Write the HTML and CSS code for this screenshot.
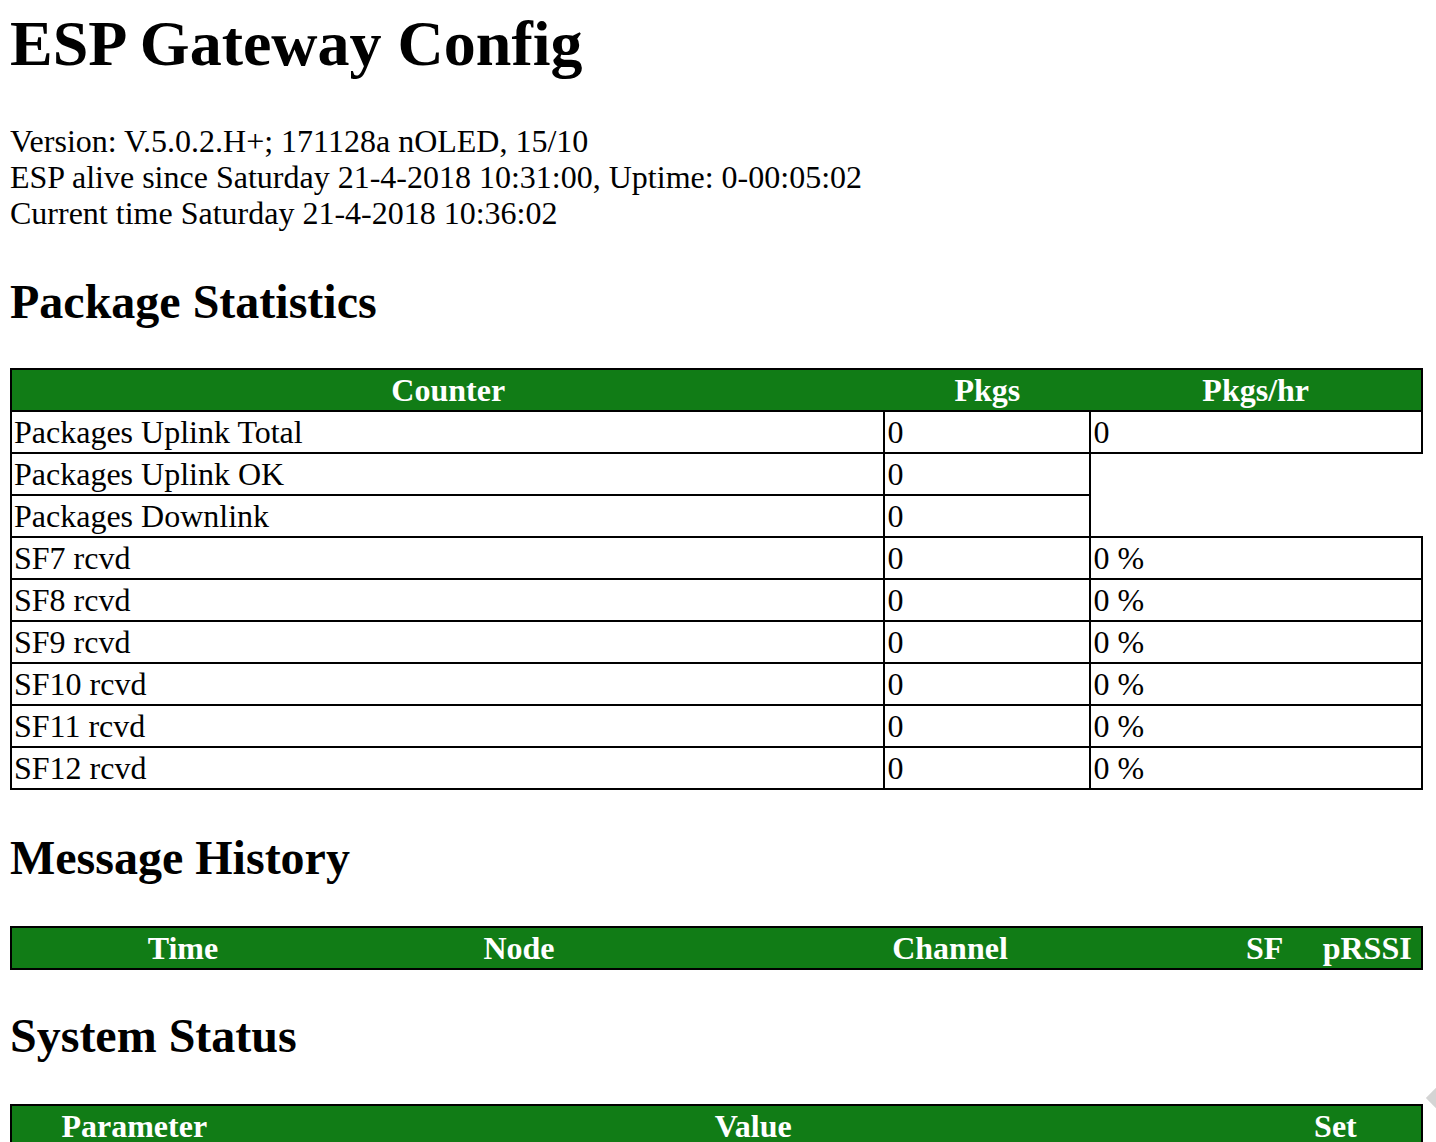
FILE: index.html
```html
<!DOCTYPE html>
<html lang="en">
<head>
  <meta charset="UTF-8">
  <title>ESP Gateway Config</title>
  <link rel="stylesheet" href="styles.css">
</head>
<body>
  <!-- Page title -->
  <h1>ESP Gateway Config</h1>

  <!-- Version and uptime info -->
  <p class="info">
    Version: V.5.0.2.H+; 171128a nOLED, 15/10<br>
    ESP alive since Saturday 21-4-2018 10:31:00, Uptime: 0-00:05:02<br>
    Current time Saturday 21-4-2018 10:36:02
  </p>

  <!-- Package statistics -->
  <h2>Package Statistics</h2>
  <table class="stats">
    <colgroup>
      <col class="c-counter">
      <col class="c-pkgs">
      <col class="c-hr">
    </colgroup>
    <tr><th>Counter</th><th>Pkgs</th><th>Pkgs/hr</th></tr>
    <tr><td>Packages Uplink Total</td><td>0</td><td>0</td></tr>
    <tr><td>Packages Uplink OK</td><td>0</td></tr>
    <tr><td>Packages Downlink</td><td>0</td></tr>
    <tr><td>SF7 rcvd</td><td>0</td><td>0 %</td></tr>
    <tr><td>SF8 rcvd</td><td>0</td><td>0 %</td></tr>
    <tr><td>SF9 rcvd</td><td>0</td><td>0 %</td></tr>
    <tr><td>SF10 rcvd</td><td>0</td><td>0 %</td></tr>
    <tr><td>SF11 rcvd</td><td>0</td><td>0 %</td></tr>
    <tr><td>SF12 rcvd</td><td>0</td><td>0 %</td></tr>
  </table>

  <!-- Message history -->
  <h2>Message History</h2>
  <table class="history">
    <colgroup>
      <col class="c-time">
      <col class="c-node">
      <col class="c-channel">
      <col class="c-sf">
      <col class="c-rssi">
    </colgroup>
    <tr><th>Time</th><th>Node</th><th>Channel</th><th>SF</th><th>pRSSI</th></tr>
  </table>

  <!-- System status -->
  <h2>System Status</h2>
  <table class="status">
    <colgroup>
      <col class="c-param">
      <col class="c-value">
      <col class="c-set">
    </colgroup>
    <tr><th>Parameter</th><th>Value</th><th>Set</th></tr>
  </table>

  <div class="edge-handle"></div>
</body>
</html>
```

FILE: styles.css
```css
/* Base page */
body {
  margin: 0 13px 0 10px;
  font-family: "Liberation Serif", "Times New Roman", serif;
  font-size: 32px;
  line-height: 36px;
  color: #000;
  background: #fff;
}

h1 {
  font-size: 64px;
  line-height: 72px;
  margin: 8px 0 43px;
}

h2 {
  font-size: 48px;
  line-height: 54px;
  margin: 0;
}

.info {
  margin: 0 0 44px;
}

/* Tables */
table {
  width: 100%;
  border-collapse: collapse;
  table-layout: fixed;
}

td {
  border: 2px solid #000;
  padding: 0 2px;
  height: 40px;
  text-align: left;
  white-space: nowrap;
}

/* Green header row, no lines between the header cells */
th {
  border-top: 2px solid #000;
  border-bottom: 2px solid #000;
  padding: 0 2px;
  height: 40px;
  background-color: #117c16;
  color: #fff;
  text-align: center;
  font-weight: bold;
  white-space: nowrap;
}

th:first-child {
  border-left: 2px solid #000;
}

th:last-child {
  border-right: 2px solid #000;
}

.stats {
  margin: 39px 0 41px;
}

.history {
  margin: 41px 0 39px;
}

.status {
  margin: 41px 0 0;
}

/* Column widths */
.c-counter { width: 61.9%; }
.c-pkgs { width: 14.6%; }
.c-hr { width: 23.5%; }

.c-time { width: 24.3%; }
.c-node { width: 23.4%; }
.c-channel { width: 37.7%; }
.c-sf { width: 6.9%; }
.c-rssi { width: 7.7%; }

.c-param { width: 17.4%; }
.c-value { width: 70.4%; }
.c-set { width: 12.2%; }

/* Grey handle peeking at the right edge */
.edge-handle {
  position: fixed;
  right: -14px;
  top: 1088px;
  width: 20px;
  height: 20px;
  background: #d4d4d4;
  transform: rotate(45deg);
}
```
